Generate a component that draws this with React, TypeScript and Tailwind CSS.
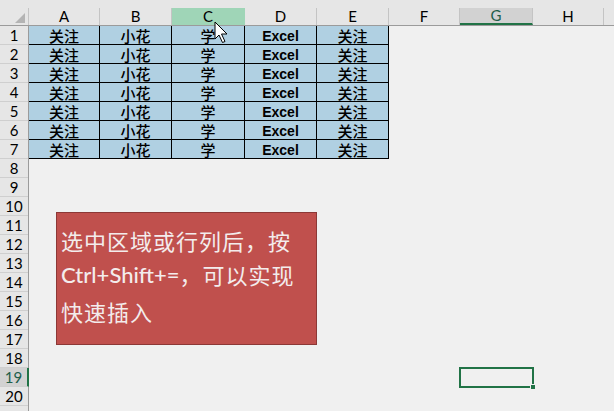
const COLS = [
  { key: 'A', w: 'w-[71px]' },
  { key: 'B', w: 'w-[72px]' },
  { key: 'C', w: 'w-[73px]' },
  { key: 'D', w: 'w-[72px]' },
  { key: 'E', w: 'w-[72px]' },
  { key: 'F', w: 'w-[71px]' },
  { key: 'G', w: 'w-[73px]' },
  { key: 'H', w: 'w-[71px]' },
  { key: '', w: 'w-[72px]' },
];

const ROW_VALUES = ['关注', '小花', '学', 'Excel', '关注'];
const ROWS = Array.from({ length: 21 }, (_, i) => i + 1);

function Cursor() {
  return (
    <svg className="absolute left-[214px] top-[21px]" width="14" height="23" viewBox="0 0 14 23">
      <path
        d="M1 1 L1 18 L5 14 L8.5 21.5 L11 20.5 L7.5 13 L13 13 Z"
        fill="#ffffff"
        stroke="#000000"
        strokeWidth="1"
        strokeLinejoin="miter"
      />
    </svg>
  );
}

export default function App() {
  return (
    <div className="relative w-[614px] h-[411px] overflow-hidden bg-[#f0f0f0] font-['Lato','Noto_Sans_CJK_SC',sans-serif] text-black">
      <div className="h-[8px] bg-[#e6e6e6]" />

      {/* column headers */}
      <div className="flex h-[18px] bg-[#e6e6e6] border-b border-[#9b9b9b]">
        <div className="relative w-[29px] shrink-0 border-r border-[#c4c4c4]">
          <div className="absolute right-[3px] bottom-[2px] w-0 h-0 border-l-[10px] border-l-transparent border-b-[10px] border-b-[#b4b4b4]" />
        </div>
        {COLS.map((c, i) => (
          <div
            key={i}
            className={`${c.w} shrink-0 flex items-center justify-center text-[15px] leading-none border-r ${
              c.key === 'C'
                ? 'bg-[#9fd5b7] border-[#9fd5b7]'
                : c.key === 'G'
                ? 'bg-[#d2d2d2] border-[#c4c4c4] border-b-2 border-b-[#217346] text-[#1e5e4a]'
                : 'border-[#c4c4c4]'
            }`}
          >
            {c.key}
          </div>
        ))}
      </div>

      <div className="flex">
        {/* row headers */}
        <div className="w-[29px] shrink-0 flex flex-col bg-[#e6e6e6] border-r border-[#9b9b9b]">
          {ROWS.map((r) => (
            <div
              key={r}
              className={`h-[19px] shrink-0 flex items-center justify-center text-[15px] leading-none border-b border-[#cfcfcf] ${
                r === 19 ? 'bg-[#d2d2d2] text-[#1e5e4a] border-r-2 border-r-[#217346] -mr-px' : ''
              }`}
            >
              {r <= 20 ? r : ''}
            </div>
          ))}
        </div>

        {/* sheet area */}
        <div className="relative flex-1">
          <div className="flex flex-col w-[360px]">
            {Array.from({ length: 7 }, (_, r) => (
              <div key={r} className="flex h-[19px] border-b border-black">
                {ROW_VALUES.map((v, i) => (
                  <div
                    key={i}
                    className={`${COLS[i].w} shrink-0 flex items-center justify-center bg-[#b0d0e2] border-r border-black ${
                      v === 'Excel'
                        ? "font-['Liberation_Sans',sans-serif] font-bold text-[14px] pt-[2px]"
                        : "font-['Noto_Sans_CJK_SC',sans-serif] font-medium text-[15px]"
                    } leading-none`}
                  >
                    {v}
                  </div>
                ))}
              </div>
            ))}
          </div>

          {/* text box shape */}
          <div className="absolute left-[27px] top-[186px] w-[261px] h-[133px] bg-[#c0504d] border border-[#8c3836] text-[#f3ecec] text-[22px] pl-[4px] font-['Noto_Sans_CJK_SC',sans-serif] tracking-[1px]">
            <div className="h-[34px] mt-[10px] flex items-center whitespace-nowrap">
              选中区域或行列后，按
            </div>
            <div className="h-[34px] flex items-center whitespace-nowrap">
              <span className="font-['Lato',sans-serif] font-medium tracking-normal">Ctrl+Shift+=</span>
              <span>，可以实现</span>
            </div>
            <div className="h-[40px] flex items-center whitespace-nowrap">
              快速插入
            </div>
          </div>

          {/* selected cell G19 */}
          <div className="absolute left-[430px] top-[341px] w-[75px] h-[21px] border-2 border-[#217346]">
            <div className="absolute -right-[4px] -bottom-[4px] w-[6px] h-[6px] bg-[#217346] border border-[#f0f0f0]" />
          </div>
        </div>
      </div>

      <Cursor />
    </div>
  );
}
